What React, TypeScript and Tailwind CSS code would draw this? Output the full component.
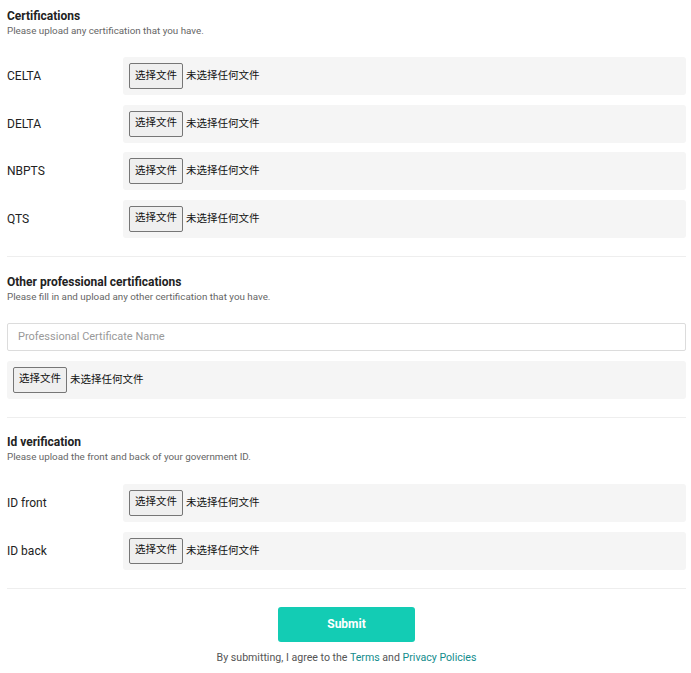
import React from 'react';

const CJK = "font-['Roboto','Noto_Sans_CJK_SC',sans-serif]";

function FileBox({ full }: { full?: boolean }) {
    return (
        <div className={`flex items-center h-[38px] px-[6px] bg-[#f5f5f5] rounded-[3px] ${full ? 'w-full' : 'flex-1'}`}>
            <button
                type="button"
                className={`h-[26px] px-[5px] border border-[#767676] rounded-[2px] bg-[#efefef] text-[10.5px] text-[#111] leading-none ${CJK}`}
            >
                选择文件
            </button>
            <span className={`ml-[3px] text-[10.5px] text-[#111] ${CJK}`}>未选择任何文件</span>
        </div>
    );
}

function UploadRow({ label }: { label: string }) {
    return (
        <div className="flex items-center">
            <div className="w-[116px] text-[12px] text-[#222]">{label}</div>
            <FileBox />
        </div>
    );
}

function SectionHeader({ title, subtitle }: { title: string; subtitle: string }) {
    return (
        <div>
            <h2 className="text-[12px] leading-[16px] font-bold text-[#222]">{title}</h2>
            <p className="text-[9.8px] leading-[14px] text-[#666]">{subtitle}</p>
        </div>
    );
}

export default function App() {
    return (
        <div className="min-h-screen bg-white font-['Roboto',sans-serif]">
            <div className="pl-[7px] pr-[5px] pt-[8px]">
                {/* Certifications */}
                <SectionHeader title="Certifications" subtitle="Please upload any certification that you have." />
                <div className="flex flex-col gap-[9.5px] mt-[19px]">
                    <UploadRow label="CELTA" />
                    <UploadRow label="DELTA" />
                    <UploadRow label="NBPTS" />
                    <UploadRow label="QTS" />
                </div>
                <div className="border-t border-[#eeeeee] mt-[18px]" />

                {/* Other professional certifications */}
                <div className="mt-[17px]">
                    <SectionHeader
                        title="Other professional certifications"
                        subtitle="Please fill in and upload any other certification that you have."
                    />
                </div>
                <input
                    type="text"
                    placeholder="Professional Certificate Name"
                    className="block w-full h-[28px] mt-[19px] px-[10px] border border-[#dcdcdc] rounded-[2px] text-[11px] text-[#222] placeholder:text-[#999] outline-none"
                />
                <div className="mt-[10px]">
                    <FileBox full />
                </div>
                <div className="border-t border-[#eeeeee] mt-[18px]" />

                {/* Id verification */}
                <div className="mt-[16px]">
                    <SectionHeader title="Id verification" subtitle="Please upload the front and back of your government ID." />
                </div>
                <div className="flex flex-col gap-[10px] mt-[20px]">
                    <UploadRow label="ID front" />
                    <UploadRow label="ID back" />
                </div>
                <div className="border-t border-[#eeeeee] mt-[18px]" />

                {/* Submit */}
                <div className="flex flex-col items-center">
                    <button
                        type="button"
                        className="mt-[18px] w-[137px] h-[35px] bg-[#13ccb4] rounded-[3px] text-white text-[12px] font-bold"
                    >
                        Submit
                    </button>
                    <p className="mt-[9px] text-[10.6px] leading-[14px] text-[#555]">
                        By submitting, I agree to the <a className="text-[#128c8c]">Terms</a> and{' '}
                        <a className="text-[#128c8c]">Privacy Policies</a>
                    </p>
                </div>
            </div>
        </div>
    );
}
